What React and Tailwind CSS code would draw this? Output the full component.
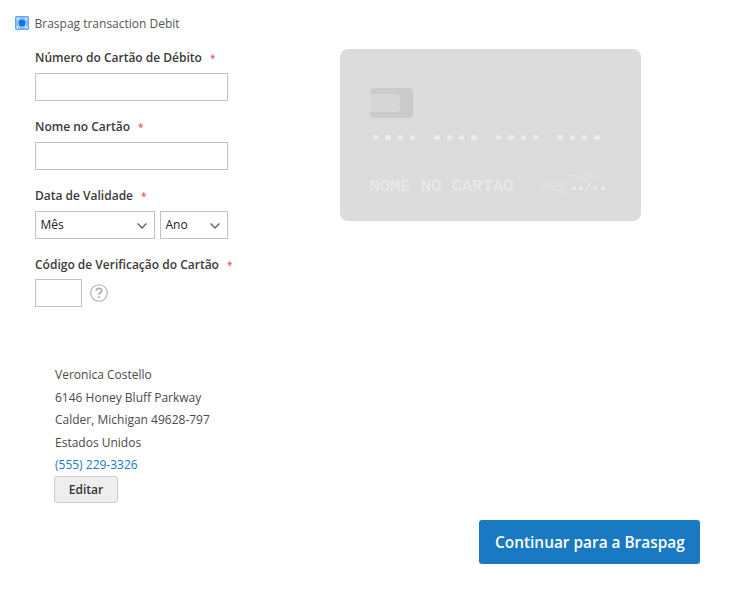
const Label = ({ children }) => (
  <div className="flex h-[18px] items-center whitespace-nowrap text-[12px] font-semibold text-[#3a3a3a]">
    <span>{children}</span>
    <span className="ml-[8px] pt-px text-[10px] font-semibold text-[#e8605d]">*</span>
  </div>
);

const Chevron = () => (
  <svg className="mt-[2px]" width="10" height="6" viewBox="0 0 10 6" fill="none" stroke="#666" strokeWidth="1.4">
    <path d="M0.6 0.6 L5 5 L9.4 0.6" />
  </svg>
);

const Select = ({ className, children }) => (
  <div className={`flex h-[28px] items-center justify-between border border-[#c2c2c2] bg-white pl-[4.5px] text-[12px] text-[#222] ${className}`}>
    <span>{children}</span>
    <Chevron />
  </div>
);

const Dots = ({ n, className }) => (
  <div className={`flex ${className}`}>
    {Array.from({ length: n }, (_, i) => (
      <span key={i} className="size-[5.3px] rounded-full bg-[#ededed]" />
    ))}
  </div>
);

const CreditCard = () => (
  <div className="mt-[49px] ml-[340px] flex h-[172px] w-[300.5px] flex-col rounded-[8px] bg-[#dcdcdc] pl-[30px] text-[#ebebeb]">
    <div className="mt-[39px] flex h-[30px] w-[43px] shrink-0 items-center rounded-[4px] bg-[#cbcbcb]">
      <div className="h-[18px] w-[30px] rounded-r-[3px] bg-[#d6d6d6]" />
    </div>
    <div className="mt-[17px] ml-[3px] flex gap-[19.3px]">
      <Dots n={4} className="gap-[7px]" />
      <Dots n={4} className="gap-[7px]" />
      <Dots n={4} className="gap-[7px]" />
      <Dots n={4} className="gap-[7px]" />
    </div>
    <div className="mt-[32px] flex h-[26px] font-['Liberation_Mono',monospace]">
      <div className="mt-[5px] -ml-[0.5px] w-[168.5px] text-[17.15px] leading-[20px] whitespace-nowrap">NOME NO CARTAO</div>
      <div className="mt-[11px] w-[28px] text-right text-[5.6px] leading-[5.5px] text-[#e3e3e3]">
        VALIDADE
        <br />
        THRU
      </div>
      <div className="ml-[5px] flex flex-col pt-[2px]">
        <div className="text-[4.8px] leading-[6px] text-[#e6e6e6]">month/year</div>
        <div className="flex h-[16px] items-center">
          <span className="ml-px size-[3.6px] rounded-full bg-[#ededed]" />
          <span className="ml-[3.8px] size-[3.6px] rounded-full bg-[#ededed]" />
          <span className="w-[10.9px] text-center text-[13px] leading-[12px]">/</span>
          <span className="size-[3.6px] rounded-full bg-[#ededed]" />
          <span className="ml-[3.8px] size-[3.6px] rounded-full bg-[#ededed]" />
        </div>
      </div>
    </div>
  </div>
);

export default function App() {
  return (
    <div className="h-[594px] w-[733px] overflow-hidden bg-white font-['Open_Sans',sans-serif] text-[12px] text-[#4a4a4a]">
      <div className="flex h-[320px]">
        <div className="-mr-[340px] w-[340px] shrink-0 pt-[15px]">
          <div className="flex h-[18px] items-center pl-[15px]">
            <svg className="mt-[-3px]" width="14" height="14" viewBox="0 0 14 14">
              <rect x="0.75" y="0.75" width="12.5" height="12.5" rx="1" fill="#dcecff" stroke="#5aa7ee" strokeWidth="1.5" />
              <circle cx="7" cy="7" r="5" fill="#fff" stroke="#5b9fee" />
              <circle cx="7" cy="7" r="3.7" fill="#1272ea" />
            </svg>
            <span className="ml-[5.5px] text-[#555]">Braspag transaction Debit</span>
          </div>
          <div className="mt-[16px] ml-[35px] w-[193px]">
            <Label>Número do Cartão de Débito</Label>
            <div className="mt-[6px] h-[28px] border border-[#c2c2c2]" />
            <div className="mt-[17px]">
              <Label>Nome no Cartão</Label>
              <div className="mt-[6px] h-[28px] border border-[#c2c2c2]" />
            </div>
            <div className="mt-[17px]">
              <Label>Data de Validade</Label>
              <div className="mt-[6px] flex gap-[5px]">
                <Select className="w-[120px] pr-[7px]">Mês</Select>
                <Select className="w-[68px] pr-[7px]">Ano</Select>
              </div>
            </div>
            <div className="mt-[17px]">
              <Label>Código de Verificação do Cartão</Label>
              <div className="mt-[5px] flex items-center">
                <div className="h-[28px] w-[47px] border border-[#c2c2c2]" />
                <svg className="ml-[8px]" width="18" height="18" viewBox="0 0 18 18" fill="none" stroke="#b0b0b0">
                  <circle cx="9" cy="9" r="8.3" strokeWidth="1.1" />
                  <path d="M6.2 6.7 C6.4 3.6 11.8 3.7 11.7 6.8 C11.6 8.7 9 8.5 9 11" strokeWidth="1.8" />
                  <path d="M9 12.2 V14" strokeWidth="1.8" />
                </svg>
              </div>
            </div>
          </div>
        </div>
        <CreditCard />
      </div>
      <div className="mt-[44px] ml-[55px] leading-[22.5px]">
        <div className="h-[112px] pt-[0.4px]">
          <div>Veronica Costello</div>
          <div>6146 Honey Bluff Parkway</div>
          <div>Calder, Michigan 49628-797</div>
          <div>Estados Unidos</div>
          <div className="text-[#1979c3]">(555) 229-3326</div>
        </div>
        <button className="-ml-px flex h-[27px] w-[64px] items-center justify-center rounded-[3px] border border-[#ccc] bg-[#eee] pt-px font-semibold text-[#333]">
          Editar
        </button>
      </div>
      <button className="mt-[17px] ml-[479.4px] flex h-[44px] w-[221px] items-center justify-center rounded-[3px] bg-[#1979c3] pt-px text-[15.4px] font-semibold whitespace-nowrap text-white">
        Continuar para a Braspag
      </button>
    </div>
  );
}
